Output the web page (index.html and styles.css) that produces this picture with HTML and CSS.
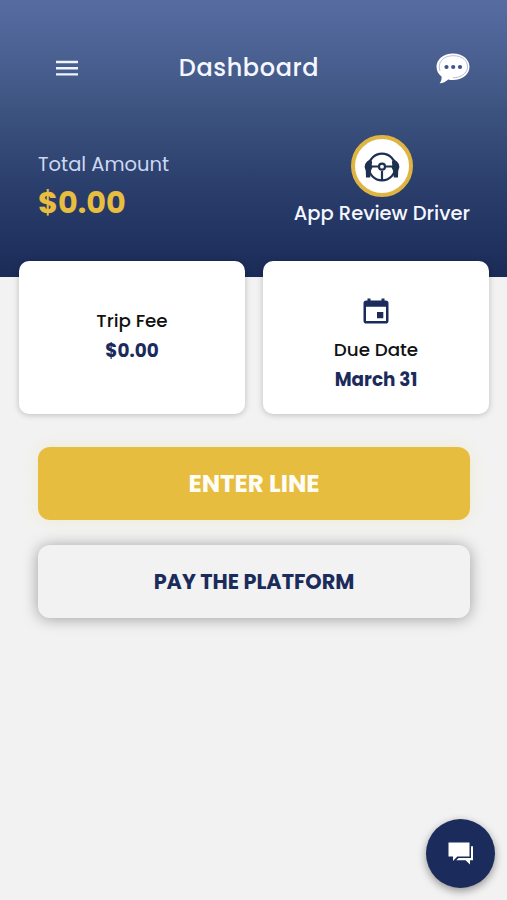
FILE: index.html
```html
<!DOCTYPE html>
<html lang="en">

<head>
    <meta charset="utf-8" />
    <meta name="viewport" content="width=device-width, initial-scale=1">
    <title>Dashboard</title>
    <link rel="stylesheet" href="styles.css">
</head>

<body>
    <header class="header">
        <div class="topbar">
            <svg class="menu-icon" viewBox="0 0 24 18">
                <path d="M1 3h22M1 9.200h22M1 15.400h22" />
            </svg>
            <h1>Dashboard</h1>
            <svg class="chat-icon" viewBox="0 0 34 31">
                <path class="bubble" d="M17 .5C26.300 .5 33.500 6 33.500 13.800S26.300 27 17 27c-1.700 0-3.300-.2-4.800-.6C9.800 28.600 7 30.100 3.600 30.300c1.700-2 2.200-4.300 1.900-6.800C2.300 21 .5 17.800 .5 13.800 .5 6 7.700 .5 17 .5z" />
                <path class="line" d="M4 18C1 10 7 2.700 17 2.700S31.500 8 31.500 14 25 24.800 17 24.800" />
                <circle cx="10.500" cy="14" r="2.100" />
                <circle cx="17.200" cy="14" r="2.100" />
                <circle cx="24" cy="14" r="2.100" />
            </svg>
        </div>
        <div class="summary">
            <div class="total">
                <p class="total-label">Total Amount</p>
                <p class="total-value">$0.00</p>
            </div>
            <div class="driver">
                <div class="avatar">
                    <svg viewBox="0 0 36 32">
                        <circle class="rim" cx="18" cy="16" r="13.300" />
                        <path class="spoke" d="M5 15.500h9M22 15.500h9M18 20v9" />
                        <circle class="hub" cx="18" cy="15.700" r="3" />
                        <path class="hand" d="M3 10.500l3.500-2.500 1.600 3-.4 3 .7 2.500-1.600 3.500-.6 6.500H2l-.2-6.500L.6 16l.6-3z" />
                        <path class="hand" d="M33 10.500l-3.500-2.500-1.600 3 .4 3-.7 2.500 1.600 3.500 .6 6.500H34l.2-6.500 1.200-4-.6-3z" />
                    </svg>
                </div>
                <p class="driver-name">App Review Driver</p>
            </div>
        </div>
    </header>

    <main>
        <section class="cards">
            <div class="card trip">
                <p class="card-label">Trip Fee</p>
                <p class="card-value">$0.00</p>
            </div>
            <div class="card due">
                <svg class="calendar-icon" viewBox="0 0 26 26">
                    <path d="M4.500 .5h3v2h11v-2h3v2h1.200A2.800 2.800 0 0 1 25.500 5.300v17.400a2.800 2.800 0 0 1-2.800 2.800H3.300A2.800 2.800 0 0 1 .5 22.700V5.300a2.800 2.800 0 0 1 2.800-2.800h1.200zM3 8.700v14.200h20V8.700zM14 14h6.300v6.300H14z" />
                </svg>
                <p class="card-label">Due Date</p>
                <p class="card-value">March 31</p>
            </div>
        </section>
        <section class="actions">
            <button class="btn btn-primary">ENTER LINE</button>
            <button class="btn btn-secondary">PAY THE PLATFORM</button>
        </section>
    </main>

    <button class="fab" aria-label="Messages">
        <svg viewBox="0 0 26 23">
            <path d="M.5 .5h21v14H9.300L5 19v-4.500H.5z" />
            <path d="M23 4.300h2v14h-3v4.200l-4.500-4.200H8.300l2.200-2.200H23z" />
        </svg>
    </button>
</body>

</html>
```
FILE: styles.css
```css
* {
    box-sizing: border-box;
    margin: 0;
    padding: 0;
}

body {
    min-height: 100vh;
    background: #f2f2f2;
    color: #111;
    font-family: 'Poppins', 'Inter', 'Liberation Sans', sans-serif;
}

svg {
    display: block;
}

/* header */

.header {
    height: 277px;
    padding-top: 48px;
    background: linear-gradient(#576da2 0%, #4f6598 13%, #3d537f 40%, #2c406d 65%, #1b2b58 100%);
    color: #f4f7ff;
}

.topbar {
    display: flex;
    align-items: center;
    justify-content: space-between;
    height: 40px;
    padding: 0 37px 0 55px;
}

.topbar h1 {
    margin-right: 17px;
    font-size: 24px;
    font-weight: 500;
    line-height: 40px;
    letter-spacing: .6px;
}

.menu-icon {
    width: 24px;
    height: 18px;
    fill: none;
    stroke: #eef3ff;
    stroke-width: 2.4;
}

.chat-icon {
    width: 34px;
    height: 31px;
    fill: #3f5488;
}

.chat-icon .bubble {
    fill: #fff;
}

.chat-icon .line {
    fill: none;
    stroke: #99a4c4;
    stroke-width: .7;
}

.summary {
    display: flex;
    justify-content: space-between;
    padding: 47px 37px 0 38px;
}

.total {
    padding-top: 15px;
}

.total-label {
    color: #ccd8f3;
    font-size: 19.5px;
    line-height: 30px;
}

.total-value {
    margin-top: 3px;
    color: #e8be40;
    font-size: 30.3px;
    font-weight: 700;
    line-height: 40px;
}

.driver {
    display: flex;
    flex-direction: column;
    align-items: center;
}

.avatar {
    display: flex;
    align-items: center;
    justify-content: center;
    width: 62px;
    height: 62px;
    border: 4px solid #dfb442;
    border-radius: 50%;
    background: #fff;
}

.avatar svg {
    width: 36px;
    height: 32px;
    margin-top: 2px;
    fill: #1d3050;
}

.avatar .rim,
.avatar .spoke,
.avatar .hub {
    fill: none;
    stroke: #1d3050;
    stroke-width: 2.2;
}

.driver-name {
    margin-top: 2px;
    font-size: 19.5px;
    font-weight: 500;
    line-height: 30px;
}

/* cards */

.cards {
    display: grid;
    grid-template-columns: 1fr 1fr;
    gap: 18px;
    margin-top: -16px;
    padding: 0 18px 0 19px;
}

.card {
    display: flex;
    flex-direction: column;
    align-items: center;
    height: 153px;
    border-radius: 10px;
    background: #fff;
    box-shadow: 0 1px 6px rgba(0, 0, 0, .22);
}

.card.trip {
    padding-top: 45px;
}

.card.due {
    padding-top: 37px;
}

.card-label {
    font-size: 18.3px;
    font-weight: 500;
    line-height: 29px;
}

.card-value {
    color: #1a2b5c;
    font-size: 18.4px;
    font-weight: 700;
    line-height: 31px;
}

.calendar-icon {
    width: 26px;
    height: 26px;
    margin-bottom: 11px;
    fill: #1a2b5c;
    fill-rule: evenodd;
}

/* buttons */

button {
    border: 0;
    font-family: inherit;
}

.actions {
    display: flex;
    flex-direction: column;
    gap: 25px;
    padding: 33px 37px 0 38px;
}

.btn {
    height: 73px;
    border-radius: 12px;
}

.btn-primary {
    background: #e7bd40;
    box-shadow: 0 0 16px rgba(231, 220, 140, .3);
    color: #fffdf5;
    font-size: 24.5px;
    font-weight: 700;
}

.btn-secondary {
    background: #f2f2f2;
    box-shadow: 0 1px 15px rgba(0, 0, 0, .35);
    color: #1a2b5c;
    font-size: 20.8px;
    font-weight: 700;
}

.fab {
    display: flex;
    align-items: center;
    justify-content: center;
    position: fixed;
    right: 12px;
    bottom: 12px;
    width: 69px;
    height: 69px;
    border-radius: 50%;
    background: #1a2b5c;
    box-shadow: 0 3px 8px rgba(0, 0, 0, .4);
}

.fab svg {
    width: 26px;
    height: 23px;
    fill: #fff;
}
```
